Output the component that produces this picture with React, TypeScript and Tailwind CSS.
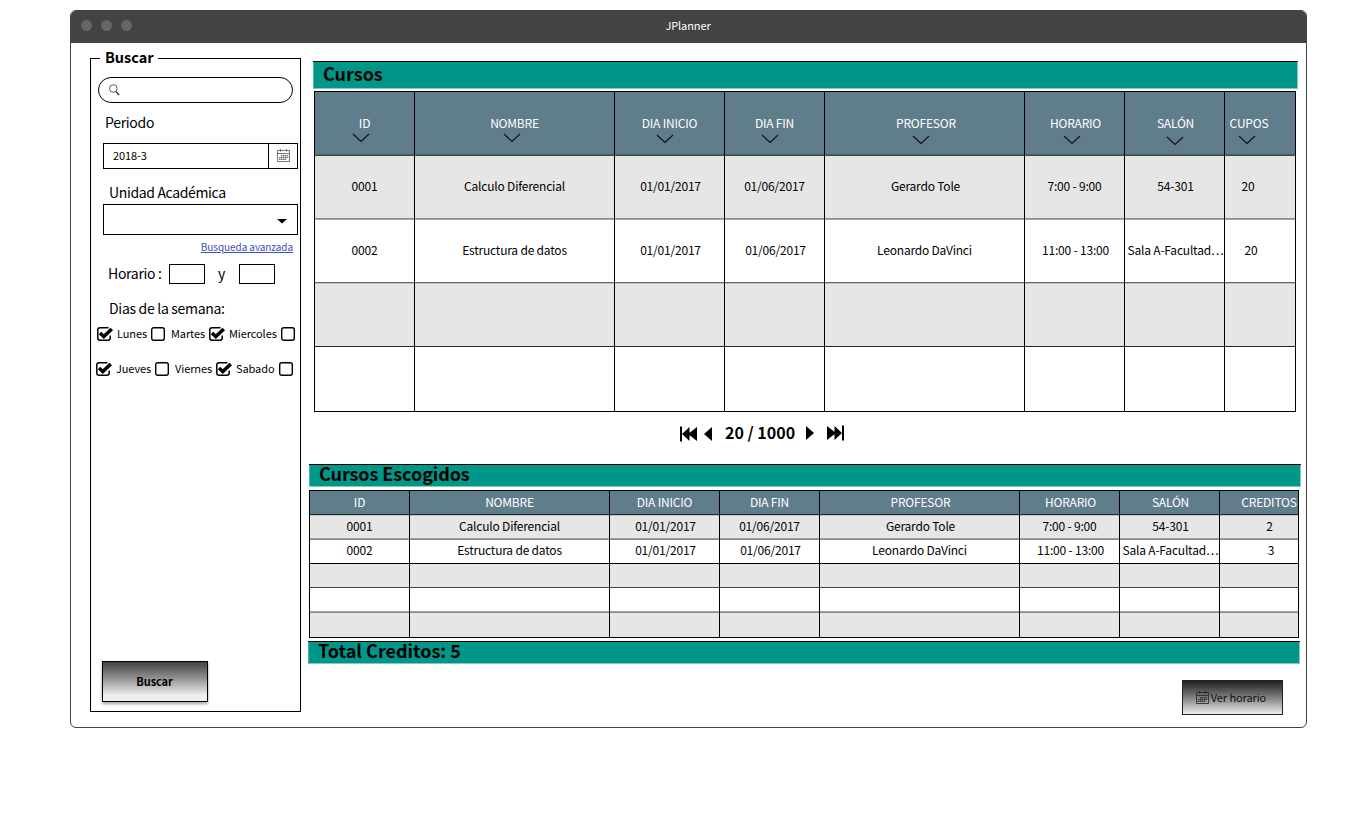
import React from "react";

type Cell = { t: string; s?: string };

const cell = (t: string, s = ""): Cell => ({ t, s });

function Chevron({ className }: { className: string }) {
  return (
    <svg width="18" height="10" viewBox="0 0 18 10" fill="none" stroke="#111" strokeWidth="1.15" className={`shrink-0 ${className}`}>
      <path d="M1 1 L9 8.5 L17 1" />
    </svg>
  );
}

function CalendarIcon({ color }: { color: string }) {
  return (
    <svg width="13" height="13" viewBox="0 0 13 13" fill="none" stroke={color} strokeWidth="0.8" className="shrink-0">
      <path d="M0.5 1.5 H12.5 V12.5 H0.5 Z M0.5 4.5 H12.5 M3.5 0 V2.6 M9.5 0 V2.6" />
      <path d="M4.2 6.5 H11 M2 8.5 H11 M2 10.5 H9 M2.4 8.5 V10.8 M4.5 6.3 V10.8 M6.6 6.3 V10.8 M8.7 6.3 V10.8 M10.8 6.3 V8.8" strokeWidth="0.6" />
    </svg>
  );
}

function Check({ on }: { on?: boolean }) {
  return (
    <svg width="18" height="16" viewBox="0 0 18 16" fill="none" className="shrink-0">
      {on ? (
        <>
          <path d="M12.5 1.8 H4 Q1.8 1.8 1.8 4 V12 Q1.8 14.2 4 14.2 H12 Q14.2 14.2 14.2 12 V9.5" stroke="#000" strokeWidth="1.5" />
          <path d="M4 7 L7.8 10.6 L15.8 3" stroke="#000" strokeWidth="3.5" />
        </>
      ) : (
        <rect x="1.7" y="1.7" width="12.6" height="12.6" rx="2" stroke="#000" strokeWidth="1.4" />
      )}
    </svg>
  );
}

function Banner({ children, className }: { children: React.ReactNode; className: string }) {
  return (
    <h2 className={`border-t border-t-black bg-[#009688] text-[18px] font-bold text-black whitespace-nowrap shadow-[inset_0_-1px_0_#80cac3,inset_1px_0_0_#4db5ab,inset_-1px_0_0_#80cac3] ${className}`}>
      {children}
    </h2>
  );
}

const courseHead = [
  cell("ID"), cell("NOMBRE"), cell("DIA INICIO"), cell("DIA FIN"),
  cell("PROFESOR", "pl-[3px]"), cell("HORARIO", "pl-[2px]"), cell("SALÓN", "pl-[2px]"), cell("CUPOS", "pr-[22px]"),
];
const chevrons = ["mr-[8px]", "mr-[6px]", "mr-[10px] mt-px", "mr-[9px] mt-px", "mr-[8px] mt-[2px]", "mr-[6px] mt-[2px]", "mt-[3px]", "mr-[27px] mt-[2px]"];
const courseRows: Cell[][] = [
  [cell("0001"), cell("Calculo Diferencial"), cell("01/01/2017", "pl-[2px]"), cell("01/06/2017"), cell("Gerardo Tole", "pl-[2px]"), cell("7:00 - 9:00"), cell("54-301", "pl-[2px]"), cell("20", "pr-[24px]")],
  [cell("0002"), cell("Estructura de datos"), cell("01/01/2017", "pl-[2px]"), cell("01/06/2017", "pl-[2px]"), cell("Leonardo DaVinci"), cell("11:00 - 13:00", "pl-[2px]"), cell("Sala A-Facultad…", "pl-[2px]"), cell("20", "pr-[18px]")],
  Array.from({ length: 8 }, () => cell("")),
  Array.from({ length: 8 }, () => cell("")),
];
const courseLines = [
  "h-[64px] bg-[#e6e6e6] shadow-[inset_0_1px_0_#434343,inset_0_-1px_0_#8a8a8a]",
  "h-[64px] bg-white shadow-[inset_0_1px_0_#a6a6a6,inset_0_-1px_0_#666]",
  "h-[64px] bg-[#e6e6e6] shadow-[inset_0_1px_0_#c0c0c0,inset_0_-1px_0_#262626]",
  "h-[64px] bg-white",
];

const pickHead = [
  cell("ID"), cell("NOMBRE"), cell("DIA INICIO"), cell("DIA FIN"),
  cell("PROFESOR", "pl-[2px]"), cell("HORARIO", "pl-[2px]"), cell("SALÓN", "pl-[2px]"), cell("CREDITOS", "pl-[20px]"),
];
const pickRows: Cell[][] = [
  [cell("0001"), cell("Calculo Diferencial"), cell("01/01/2017", "pl-[2px]"), cell("01/06/2017"), cell("Gerardo Tole", "pl-[2px]"), cell("7:00 - 9:00"), cell("54-301", "pl-[2px]"), cell("2", "pl-[21px]")],
  [cell("0002"), cell("Estructura de datos"), cell("01/01/2017", "pl-[2px]"), cell("01/06/2017", "pl-[2px]"), cell("Leonardo DaVinci"), cell("11:00 - 13:00", "pl-[2px]"), cell("Sala A-Facultad…", "pl-[2px]"), cell("3", "pl-[24px]")],
  Array.from({ length: 8 }, () => cell("")),
  Array.from({ length: 8 }, () => cell("")),
  Array.from({ length: 8 }, () => cell("")),
];
const pickLines = [
  "h-[24px] bg-[#e6e6e6] shadow-[inset_0_1px_0_#c8c8c8,inset_0_-1px_0_#a0a0a0]",
  "h-[24px] bg-white shadow-[inset_0_1px_0_#888]",
  "h-[25px] bg-[#e6e6e6] shadow-[inset_0_1px_0_#000,inset_0_-1px_0_#444]",
  "h-[24px] bg-white shadow-[inset_0_-1px_0_#a6a6a6]",
  "h-[25px] bg-[#e6e6e6] shadow-[inset_0_1px_0_#888]",
];

export default function App() {
  return (
    <div className="h-[838px] w-[1357px] overflow-hidden bg-white pt-[10px] pl-[70px] text-black font-['Noto_Sans_CJK_SC','Noto_Sans_CJK_JP',sans-serif]">
      <div className="flex h-[718px] w-[1237px] flex-col overflow-hidden rounded-[6px] border border-[#434343] bg-white">
        <header className="grid h-[32px] shrink-0 grid-cols-[1fr_auto_1fr] items-center bg-[#434343] pl-[10px]">
          <div className="-mt-[4px] flex gap-[9px]">
            <i className="size-[11px] rounded-full bg-[#666]" />
            <i className="size-[11px] rounded-full bg-[#666]" />
            <i className="size-[11px] rounded-full bg-[#666]" />
          </div>
          <h1 className="-mt-[5px] pr-[11px] text-[11px] leading-[16px] tracking-[-0.1px] text-white">JPlanner</h1>
        </header>

        <div className="flex min-h-0 flex-1">
          <aside className="mt-[15px] ml-[19px] flex h-[654px] w-[211px] shrink-0 flex-col border border-black">
            <h2 className="-mt-[12px] ml-[9px] h-[22px] w-[58px] shrink-0 bg-white pl-[5px] text-[14.5px] leading-[19px] font-bold">Buscar</h2>
            <div className="mt-[8px] ml-[7px] flex h-[26px] w-[195px] shrink-0 items-center rounded-full border border-black pl-[10px]">
              <svg width="11" height="12" viewBox="0 0 11 12" fill="none" stroke="#333" strokeWidth="0.8">
                <circle cx="4.3" cy="4.5" r="3.8" />
                <path d="M6.8 7.6 L10.2 11" strokeWidth="1.3" />
              </svg>
            </div>
            <p className="mt-[9px] ml-[14px] h-[22px] text-[14px] leading-[20px] tracking-[-0.3px]">Periodo</p>
            <div className="mt-[9px] ml-[12px] flex h-[26px] w-[195px] shrink-0 border border-black">
              <span className="w-[165px] border-r border-black pl-[9px] text-[11px] leading-[23px] tracking-[-0.1px]">2018-3</span>
              <span className="flex flex-1 items-start justify-center pt-[5px]"><CalendarIcon color="#555" /></span>
            </div>
            <p className="mt-[13px] ml-[18px] h-[22px] text-[14px] leading-[20px] tracking-[-0.35px]">Unidad Académica</p>
            <div className="ml-[12px] flex h-[31px] w-[195px] shrink-0 items-center justify-end border border-black pt-[3px] pr-[10px]">
              <svg width="10" height="5" viewBox="0 0 10 5"><path d="M0 0 H10 L5 4.5 Z" fill="#000" /></svg>
            </div>
            <a className="mt-[4px] mr-[7px] h-[16px] self-end text-[10px] leading-[15px] tracking-[-0.08px] text-[#3f51b5] underline">Busqueda avanzada</a>
            <div className="mt-[9px] flex h-[20px] items-start pl-[17px] text-[14px] leading-[18px] tracking-[-0.3px]">
              <span className="w-[61px]">Horario :</span>
              <i className="h-[20px] w-[36px] border border-black" />
              <span className="w-[34px] pl-[13px]">y</span>
              <i className="h-[20px] w-[36px] border border-black" />
            </div>
            <p className="mt-[14px] ml-[18px] h-[22px] text-[14px] leading-[20px] tracking-[-0.3px]">Dias de la semana:</p>
            <div className="mt-[6px] flex h-[16px] items-start pl-[5px] text-[11px] leading-[15px] tracking-[-0.1px] whitespace-nowrap">
              <Check on /><span className="w-[36px] pl-[3px]">Lunes</span>
              <Check /><span className="w-[40px] pl-[3px]">Martes</span>
              <Check on /><span className="w-[54px] pl-[3px]">Miercoles</span>
              <Check />
            </div>
            <div className="mt-[19px] flex h-[16px] items-start pl-[4px] text-[11px] leading-[15px] tracking-[-0.1px] whitespace-nowrap">
              <Check on /><span className="w-[41px] pl-[3px]">Jueves</span>
              <Check /><span className="w-[43px] pl-[3px]">Viernes</span>
              <Check on /><span className="w-[45px] pl-[3px]">Sabado</span>
              <Check />
            </div>
            <button className="mt-auto mb-[9px] ml-[11px] h-[41px] w-[106px] shrink-0 border border-black bg-linear-to-b from-[#434343] to-[#eee] to-85% pr-px text-[11px] font-bold tracking-[-0.1px] shadow-[0_2px_3px_rgba(0,0,0,0.35)]">Buscar</button>
          </aside>

          <main className="flex min-w-0 flex-1 flex-col pl-[7px]">
            <Banner className="mt-[18px] ml-[5px] h-[28px] w-[985px] pl-[10px] leading-[22px]">Cursos</Banner>
            <section className="mt-[2px] ml-[6px] w-[982px] border-y border-r border-black text-[12px] tracking-[-0.2px] whitespace-nowrap">
              <div className="grid grid-cols-[100px_200px_110px_100px_200px_100px_100px_71px] bg-[#607d8b] text-white">
                {courseHead.map((c, i) => (
                  <div key={i} className="flex h-[63px] flex-col items-center border-l border-black pt-[22px] shadow-[inset_0_-1px_0_#4d6470]">
                    <span className={`h-[19px] leading-[18px] ${c.s}`}>{c.t}</span>
                    <Chevron className={chevrons[i]} />
                  </div>
                ))}
              </div>
              {courseRows.map((r, j) => (
                <div key={j} className="grid grid-cols-[100px_200px_110px_100px_200px_100px_100px_71px]">
                  {r.map((c, i) => (
                    <div key={i} className={`flex items-center justify-center border-l border-black pb-[2px] ${courseLines[j]} ${c.s}`}>{c.t}</div>
                  ))}
                </div>
              ))}
            </section>

            <nav className="mt-[9px] ml-[372px] flex h-[25px] items-center">
              <svg width="18" height="16" viewBox="0 0 18 16"><path d="M0 0.5 H2 V15.5 H0 Z M2 8 L9.5 1 V15 Z M8 8 L17 1 V15 Z" /></svg>
              <svg className="ml-[6px]" width="8" height="14" viewBox="0 0 8 14"><path d="M8 0 V14 L0 7 Z" /></svg>
              <span className="mb-[2px] w-[84px] pl-[13px] text-[16px] leading-[23px] font-bold whitespace-nowrap">20 / 1000</span>
              <svg className="mb-[2px] ml-[10px]" width="8" height="14" viewBox="0 0 8 14"><path d="M0 0 V14 L8 7 Z" /></svg>
              <svg className="mb-[2px] ml-[13px]" width="18" height="16" viewBox="0 0 18 16"><path d="M17 0.5 H15 V15.5 H17 Z M15 8 L7.5 1 V15 Z M9 8 L0 1 V15 Z" /></svg>
            </nav>

            <Banner className="mt-[18px] ml-px h-[23px] w-[992px] pl-[10px] leading-[17px] tracking-[-0.08px]">Cursos Escogidos</Banner>
            <section className="mt-[3px] ml-px w-[990px] border-y border-r border-black text-[12px] tracking-[-0.2px] whitespace-nowrap">
              <div className="grid grid-cols-[100px_200px_110px_100px_200px_100px_100px_79px] bg-[#607d8b] text-white">
                {pickHead.map((c, i) => (
                  <div key={i} className={`flex h-[24px] items-center justify-center border-l border-black pb-[2px] shadow-[inset_0_-1px_0_#1c2529] ${c.s}`}>{c.t}</div>
                ))}
              </div>
              {pickRows.map((r, j) => (
                <div key={j} className="grid grid-cols-[100px_200px_110px_100px_200px_100px_100px_79px]">
                  {r.map((c, i) => (
                    <div key={i} className={`flex items-center justify-center border-l border-black pb-[2px] ${pickLines[j]} ${c.s}`}>{c.t}</div>
                  ))}
                </div>
              ))}
            </section>
            <Banner className="mt-[3px] h-[23px] w-[992px] pl-[10px] leading-[17px]">Total Creditos: 5</Banner>
            <button className="mt-[16px] mr-[23px] flex h-[35px] w-[101px] items-center justify-center gap-[2px] self-end border border-[#222] bg-linear-to-b from-[#222] to-[#eee] pr-[3px] text-[11px] tracking-[-0.1px] text-[#111]">
              <CalendarIcon color="#222" />
              <span>Ver horario</span>
            </button>
          </main>
        </div>
      </div>
    </div>
  );
}
